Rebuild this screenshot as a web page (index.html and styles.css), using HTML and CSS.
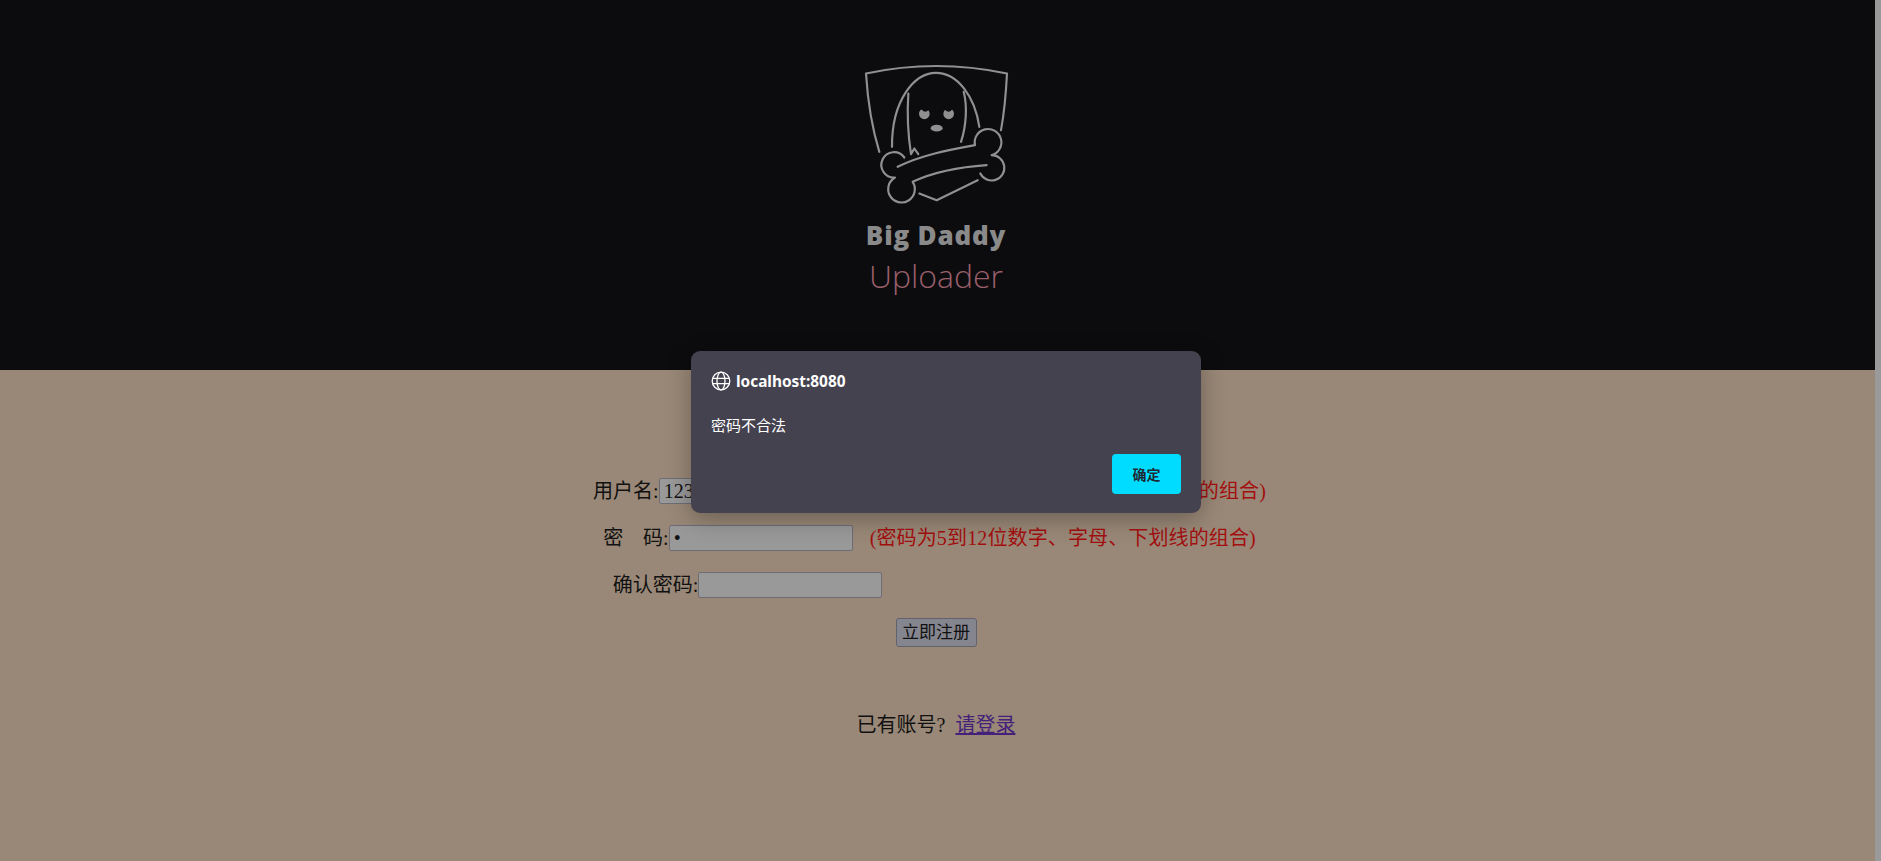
FILE: index.html
```html
<!DOCTYPE html>
<html lang="zh-CN">
<head>
    <meta charset="UTF-8">
    <meta name="viewport" content="width=device-width, initial-scale=1.0">
    <title>Big Daddy Uploader</title>
    <link rel="stylesheet" href="styles.css">
</head>
<body>
    <div class="page">
        <!-- Logo -->
        <header class="banner">
            <svg class="logo-mark" viewBox="120 60 450 440" fill="none" stroke="#909090" stroke-width="6.5" stroke-linecap="round" stroke-linejoin="round">
                <path d="M175 335 C152 260 140 180 135 100 Q345 55 558 100 C555 160 550 215 540 270"/>
                <path d="M295 460 L347 480 L470 420"/>
                <path d="M213 320 C212 180 280 98 345 98 C410 98 462 170 475 260"/>
                <path d="M262 160 C258 220 262 290 270 342 M270 342 L280 325 L292 342"/>
                <path d="M428 155 C440 200 435 260 420 305"/>
                <circle cx="310" cy="221" r="16" fill="#909090" stroke="none"/>
                <path d="M300 206 Q311 222 324 208 L324 200 L300 200 Z" fill="#0c0c0f" stroke="none"/>
                <circle cx="383" cy="221" r="16" fill="#909090" stroke="none"/>
                <path d="M371 208 Q385 222 395 206 L395 200 L371 200 Z" fill="#0c0c0f" stroke="none"/>
                <ellipse cx="347" cy="264" rx="18" ry="10" fill="#909090" stroke="none"/>
                <path d="M230 380 C300 345 380 330 462 315 A40 40 0 1 1 512 345 A38 38 0 1 1 478 400"/>
                <path d="M497 375 C420 380 340 395 275 425 A40 40 0 1 1 222 412 A38 38 0 1 1 250 352"/>
            </svg>
            <div class="logo-title">Big Daddy</div>
            <div class="logo-sub">Uploader</div>
        </header>

        <!-- Register form -->
        <main class="register">
            <form class="register-form">
                <div class="form-row">
                    <label>用户名:</label><input class="field" type="text" value="123"><span class="hint">(用户名为5到12位数字、字母、下划线的组合)</span>
                </div>
                <div class="form-row">
                    <label>密&emsp;码:</label><input class="field" type="password" value="1"><span class="hint">(密码为5到12位数字、字母、下划线的组合)</span>
                </div>
                <div class="form-row">
                    <label>确认密码:</label><input class="field" type="password"><span class="hint hint-empty"></span>
                </div>
                <div class="form-row">
                    <button class="submit" type="button">立即注册</button>
                </div>
            </form>
            <p class="login-tip">已有账号?&nbsp; <a href="#">请登录</a></p>
        </main>
    </div>
    <div class="scrollbar"></div>

    <!-- Browser alert -->
    <div class="alert">
        <div class="alert-title">
            <svg class="globe" viewBox="0 0 20 20" fill="none" stroke="#fff" stroke-width="1.3">
                <circle cx="10" cy="10" r="8.8"/>
                <ellipse cx="10" cy="10" rx="4" ry="8.8"/>
                <path d="M1.6 7.3 H18.4 M1.6 12.7 H18.4"/>
            </svg>
            <span>localhost:8080</span>
        </div>
        <div class="alert-text">密码不合法</div>
        <div class="alert-actions">
            <button class="alert-ok" type="button">确定</button>
        </div>
    </div>
</body>
</html>
```

FILE: styles.css
```css
* {
    margin: 0;
    padding: 0;
    box-sizing: border-box;
}

html, body {
    height: 100%;
    overflow: hidden;
}

body {
    display: flex;
    background-color: #998877;
    font-family: "Liberation Serif", "Noto Sans CJK SC", serif;
    font-size: 20px;
    color: #111;
}

.page {
    flex: 1;
    min-width: 0;
}

.scrollbar {
    width: 6px;
    background-color: #9a9a9a;
}

/* Logo */
.banner {
    height: 370px;
    padding: 60px 3px 0 0;
    background-color: #0c0c0f;
    display: flex;
    flex-direction: column;
    align-items: center;
    font-family: "Open Sans", "Noto Sans", sans-serif;
}

.logo-mark {
    width: 150px;
    height: 147px;
}

.logo-title {
    margin-top: 11px;
    font-size: 26px;
    line-height: 34px;
    font-weight: 800;
    letter-spacing: 0.8px;
    color: #8a8a8a;
}

.logo-sub {
    margin-top: 3px;
    font-size: 32px;
    line-height: 42px;
    font-weight: 300;
    color: #9a5f6a;
}

/* Form */
.register {
    padding: 108px 3px 0 0;
    text-align: center;
}

.form-row {
    height: 47px;
}

.form-row label {
    line-height: 26px;
}

.field {
    width: 184px;
    height: 26px;
    padding: 0 4px;
    background-color: #999;
    border: 1px solid #6e6c74;
    border-radius: 2px;
    font-family: "Liberation Serif", serif;
    font-size: 20px;
    color: #111;
    vertical-align: top;
}

.hint {
    display: inline-block;
    margin-left: 17px;
    padding-right: 13px;
    line-height: 26px;
    letter-spacing: 0.13px;
    color: #a30f0f;
}

.hint-empty {
    width: 360px;
    padding-right: 0;
}

.submit {
    margin-top: -1px;
    padding: 0 5.5px;
    height: 29px;
    background-color: #858590;
    border: 1px solid #62626c;
    border-radius: 3px;
    font-family: "Liberation Serif", "Noto Sans CJK SC", serif;
    font-size: 17px;
    line-height: 26px;
    color: #111;
    white-space: nowrap;
}

.login-tip {
    margin-top: 43px;
}

.login-tip a {
    color: #44207a;
}

/* Alert */
.alert {
    position: absolute;
    left: 691px;
    top: 351px;
    width: 510px;
    height: 162px;
    padding: 20px;
    background-color: #44424f;
    border-radius: 9px;
    box-shadow: 0 6px 24px rgba(0, 0, 0, 0.3);
    font-family: "Noto Sans", "Noto Sans CJK SC", sans-serif;
    color: #fff;
}

.alert-title {
    display: flex;
    align-items: center;
    gap: 5px;
    height: 20px;
    font-size: 15.4px;
    font-weight: 700;
}

.globe {
    width: 20px;
    height: 20px;
}

.alert-text {
    margin-top: 23px;
    font-size: 15px;
    line-height: 22px;
}

.alert-actions {
    display: flex;
    justify-content: flex-end;
    margin-top: 18px;
}

.alert-ok {
    width: 69px;
    height: 40px;
    background-color: #00dcff;
    border: none;
    border-radius: 4px;
    font-family: "Noto Sans CJK SC", sans-serif;
    font-size: 14px;
    font-weight: 700;
    color: #1e2a33;
}
```
